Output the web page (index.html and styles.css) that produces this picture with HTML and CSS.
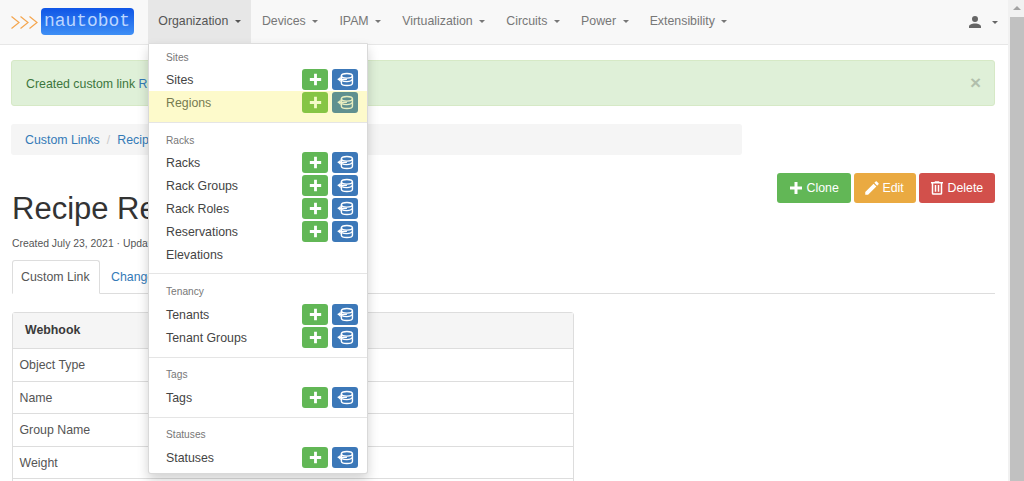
FILE: index.html
```html
<!DOCTYPE html>
<html lang="en">
<head>
<meta charset="utf-8">
<title>Recipe Rec - Nautobot</title>
<link rel="stylesheet" href="styles.css">
</head>
<body>
<svg class="defs" width="0" height="0" aria-hidden="true">
  <symbol id="i-plus" viewBox="0 0 24 24"><path d="M20 14H14V20H10V14H4V10H10V4H14V10H20V14Z"/></symbol>
  <symbol id="i-import" viewBox="0 0 24 24">
    <g fill="none" stroke="currentColor" stroke-width="2">
      <ellipse cx="14" cy="6.8" rx="7.8" ry="3.2"/>
      <path d="M6.2 6.8V17.2C6.2 19 9.7 20.4 14 20.4S21.8 19 21.8 17.2V6.8"/>
      <path d="M7 13.6C8.4 14.5 11 15 14 15S20.4 14.3 21.8 12"/>
      <path d="M1 11.8H14"/>
    </g>
    <path d="M5.2 7.8L1 11.8L5.2 15.8Z" fill="currentColor"/>
  </symbol>
</svg>
<div class="app">
  <div class="page">
    <nav class="navbar">
      <a class="brand">
        <svg class="chev" viewBox="0 0 27 13"><path d="M.5.5L8 6.5L.5 12.5M9.5.5L17 6.5L9.5 12.5M18.5.5L26 6.5L18.5 12.5"/></svg>
        <span class="logo">nautobot</span>
      </a>
      <ul class="nav">
        <li class="nav-item active">Organization<i class="caret"></i></li>
        <li class="nav-item">Devices<i class="caret"></i></li>
        <li class="nav-item">IPAM<i class="caret"></i></li>
        <li class="nav-item">Virtualization<i class="caret"></i></li>
        <li class="nav-item">Circuits<i class="caret"></i></li>
        <li class="nav-item">Power<i class="caret"></i></li>
        <li class="nav-item">Extensibility<i class="caret"></i></li>
      </ul>
      <div class="user">
        <svg class="user-icon" viewBox="0 0 24 24"><path d="M12,4A4,4 0 0,1 16,8A4,4 0 0,1 12,12A4,4 0 0,1 8,8A4,4 0 0,1 12,4M12,14C16.42,14 20,15.79 20,18V20H4V18C4,15.79 7.58,14 12,14Z"/></svg>
        <i class="caret"></i>
      </div>
    </nav>

    <main class="content">
      <div class="alert">
        <span class="alert-text">Created custom link <a>Recipe Rec</a></span>
        <span class="close">×</span>
      </div>
      <div class="top-row">
        <ol class="breadcrumb">
          <li><a>Custom Links</a></li>
          <li class="sep">/</li>
          <li><a>Recipe Rec</a></li>
        </ol>
      </div>
      <div class="actions">
        <a class="btn green"><svg viewBox="0 0 24 24"><path d="M20 14H14V20H10V14H4V10H10V4H14V10H20V14Z"/></svg>Clone</a>
        <a class="btn amber"><svg viewBox="0 0 24 24"><path d="M20.71,7.04C21.1,6.65 21.1,6 20.71,5.63L18.37,3.29C18,2.9 17.35,2.9 16.96,3.29L15.12,5.12L18.87,8.87M3,17.25V21H6.75L17.81,9.93L14.06,6.18L3,17.25Z"/></svg>Edit</a>
        <a class="btn red"><svg viewBox="0 0 24 24"><path d="M9,3V4H4V6H5V19A2,2 0 0,0 7,21H17A2,2 0 0,0 19,19V6H20V4H15V3H9M7,6H17V19H7V6M9,8V17H11V8H9M13,8V17H15V8H13Z"/></svg>Delete</a>
      </div>
      <h1 class="title">Recipe Rec</h1>
      <p class="meta">Created July 23, 2021 · Updated</p>
      <ul class="tabs">
        <li class="tab current">Custom Link</li>
        <li class="tab">Change Log</li>
      </ul>
      <section class="panel">
        <div class="panel-head">Webhook</div>
        <div class="row">Object Type</div>
        <div class="row">Name</div>
        <div class="row">Group Name</div>
        <div class="row">Weight</div>
        <div class="row"></div>
      </section>
    </main>

    <div class="menu">
      <div class="group tight">
        <div class="group-title">Sites</div>
        <div class="item"><span>Sites</span><span class="tools"><a class="mini add"><svg><use href="#i-plus"/></svg></a><a class="mini imp"><svg><use href="#i-import"/></svg></a></span></div>
        <div class="item hl"><span>Regions</span><span class="tools"><a class="mini add"><svg><use href="#i-plus"/></svg></a><a class="mini imp"><svg><use href="#i-import"/></svg></a></span></div>
      </div>
      <div class="group tight">
        <div class="group-title">Racks</div>
        <div class="item"><span>Racks</span><span class="tools"><a class="mini add"><svg><use href="#i-plus"/></svg></a><a class="mini imp"><svg><use href="#i-import"/></svg></a></span></div>
        <div class="item"><span>Rack Groups</span><span class="tools"><a class="mini add"><svg><use href="#i-plus"/></svg></a><a class="mini imp"><svg><use href="#i-import"/></svg></a></span></div>
        <div class="item"><span>Rack Roles</span><span class="tools"><a class="mini add"><svg><use href="#i-plus"/></svg></a><a class="mini imp"><svg><use href="#i-import"/></svg></a></span></div>
        <div class="item"><span>Reservations</span><span class="tools"><a class="mini add"><svg><use href="#i-plus"/></svg></a><a class="mini imp"><svg><use href="#i-import"/></svg></a></span></div>
        <div class="item"><span>Elevations</span></div>
      </div>
      <div class="group after-racks">
        <div class="group-title">Tenancy</div>
        <div class="item"><span>Tenants</span><span class="tools"><a class="mini add"><svg><use href="#i-plus"/></svg></a><a class="mini imp"><svg><use href="#i-import"/></svg></a></span></div>
        <div class="item"><span>Tenant Groups</span><span class="tools"><a class="mini add"><svg><use href="#i-plus"/></svg></a><a class="mini imp"><svg><use href="#i-import"/></svg></a></span></div>
      </div>
      <div class="group">
        <div class="group-title">Tags</div>
        <div class="item"><span>Tags</span><span class="tools"><a class="mini add"><svg><use href="#i-plus"/></svg></a><a class="mini imp"><svg><use href="#i-import"/></svg></a></span></div>
      </div>
      <div class="group">
        <div class="group-title">Statuses</div>
        <div class="item"><span>Statuses</span><span class="tools"><a class="mini add"><svg><use href="#i-plus"/></svg></a><a class="mini imp"><svg><use href="#i-import"/></svg></a></span></div>
      </div>
    </div>
  </div>
  <div class="scrollbar"><div class="sb-up"></div><div class="sb-thumb"></div></div>
</div>
</body>
</html>
```
FILE: styles.css
```css
* { box-sizing: border-box; }
html, body { margin: 0; height: 100%; overflow: hidden; }
body { font-family: "Liberation Sans", Arial, sans-serif; font-size: 12.35px; line-height: 18px; color: #3a3a3a; background: #fff; }
ul, ol { list-style: none; margin: 0; padding: 0; }
a { color: #337ab7; text-decoration: none; }
.defs { position: absolute; }
.app { display: flex; height: 481px; }
.page { position: relative; width: 1008px; overflow: hidden; }

.navbar { display: flex; align-items: stretch; height: 45px; background: #f8f8f8; border-bottom: 1px solid #e7e7e7; }
.brand { display: flex; align-items: center; width: 148px; padding-left: 11px; padding-bottom: 1px; }
.chev { flex: none; width: 27px; height: 13px; margin-top: 2px; margin-right: 2.5px; fill: none; stroke: #f5a64e; stroke-width: 1.2; }
.logo { display: block; width: 93px; height: 27px; border-radius: 4px; background: linear-gradient(#0f55e6, #3f8ff5); color: #bcd6ff; font-family: "Liberation Mono", monospace; font-size: 17.9px; line-height: 26px; text-align: center; }

.nav { display: flex; }
.nav-item { display: flex; align-items: center; padding: 0 10.3px 2px; color: #777; white-space: nowrap; }
.nav-item + .nav-item { margin-left: .5px; }
.nav-item.active { background: #e7e7e7; color: #555; }
.caret { display: inline-block; width: 0; height: 0; margin-left: 6.5px; border-top: 3.75px solid currentColor; border-left: 3.75px solid transparent; border-right: 3.75px solid transparent; }
.user { margin-left: auto; display: flex; align-items: center; padding-right: 10px; color: #666; }
.user-icon { width: 18px; height: 18px; fill: #666; }
.user .caret { margin-left: 8px; }

.content { padding: 15px 13px 0 11px; }
.alert { display: flex; justify-content: space-between; align-items: center; height: 46px; padding: 0 14px; background: #dff0d8; border: 1px solid #d6e9c6; border-radius: 3px; color: #3c763d; }
.alert-text { padding-top: 1px; }
.close { font-size: 19px; font-weight: 700; color: #000; opacity: .2; margin-right: -1px; }
.top-row { margin-top: 18px; }
.breadcrumb { display: flex; gap: 7px; width: 731px; height: 31px; align-items: center; padding: 0 14px; background: #f5f5f5; border-radius: 3px; }
.sep { color: #ccc; }

.actions { display: flex; justify-content: flex-end; gap: 3px; margin-top: 18px; height: 30px; }
.btn { display: flex; align-items: center; height: 30px; padding: 0 9px; border-radius: 3px; color: #fff; }
.btn svg { width: 18px; height: 18px; fill: #fff; margin-right: 1.5px; }
.green { background: #62b756; width: 74px; padding-left: 10px; }
.amber { background: #eaaa41; width: 62px; }
.red { background: #d2504b; width: 76px; }

.title { margin: -14px 0 0 1px; font-size: 31px; line-height: 40px; font-weight: 400; color: #333; }
.meta { margin: 8px 0 0 1px; font-size: 10.4px; line-height: 14px; color: #555; }
.tabs { display: flex; margin: 9px 0 0 1px; height: 34px; border-bottom: 1px solid #ddd; white-space: nowrap; }
.tab { padding: 8px 11px 0; height: 34px; color: #337ab7; }
.tab.current { width: 88px; padding: 7px 0 0 8px; color: #555; background: #fff; border: 1px solid #ddd; border-bottom-color: #fff; border-radius: 3px 3px 0 0; }
.panel { margin: 18px 0 0 1px; width: 562px; border: 1px solid #ddd; border-radius: 3px; }
.panel-head { height: 36px; padding: 8px 12px; background: #f5f5f5; font-weight: 700; border-bottom: 1px solid #ddd; }
.row { height: 32.6px; padding: 7px 6.5px; border-bottom: 1px solid #ddd; color: #555; }

.menu { position: absolute; left: 148px; top: 43px; width: 220px; height: 431px; background: #fff; border: 1px solid rgba(0,0,0,.15); border-top-color: #ddd; border-radius: 0 0 3px 3px; box-shadow: 0 6px 12px rgba(0,0,0,.175); }
.group { padding: 4px 0 8px; }
.group + .group { border-top: 1px solid #e5e5e5; padding-top: 8px; }
.group + .after-racks { padding-top: 9px; }
.group:last-child { padding-bottom: 0; }
.group-title { height: 18px; margin-bottom: 2px; padding: 0 17px; font-size: 10.2px; line-height: 18px; color: #777; }
.tight .group-title { position: relative; top: 1px; }
.item { display: flex; align-items: center; justify-content: space-between; height: 23px; padding: 0 9px 0 17px; color: #444; }
.hl { height: 31px; margin-bottom: -8px; padding-bottom: 8px; background: #fdfacb; color: #777a50; }
.tight:nth-child(2) { padding-bottom: 7px; }
.tools { display: flex; gap: 4px; }
.mini { display: flex; align-items: center; justify-content: center; width: 26px; height: 21px; border-radius: 3px; color: #fff; }
.mini svg { width: 17px; height: 17px; fill: currentColor; }
.add { background: #62b756; }
.imp { background: #3c78b8; }
.hl .add { background: #86c545; color: #f4fbc8; }
.hl .imp { background: #60908f; color: #e8eec0; }

.scrollbar { width: 16px; background: #f1f1f1; display: flex; flex-direction: column; }
.sb-up { height: 17px; position: relative; }
.sb-up::after { content: ""; position: absolute; left: 5px; top: 6px; border-left: 4px solid transparent; border-right: 4px solid transparent; border-bottom: 4px solid #a3a3a3; }
.sb-thumb { flex: 1; margin-left: 2px; background: #c1c1c1; }
```
